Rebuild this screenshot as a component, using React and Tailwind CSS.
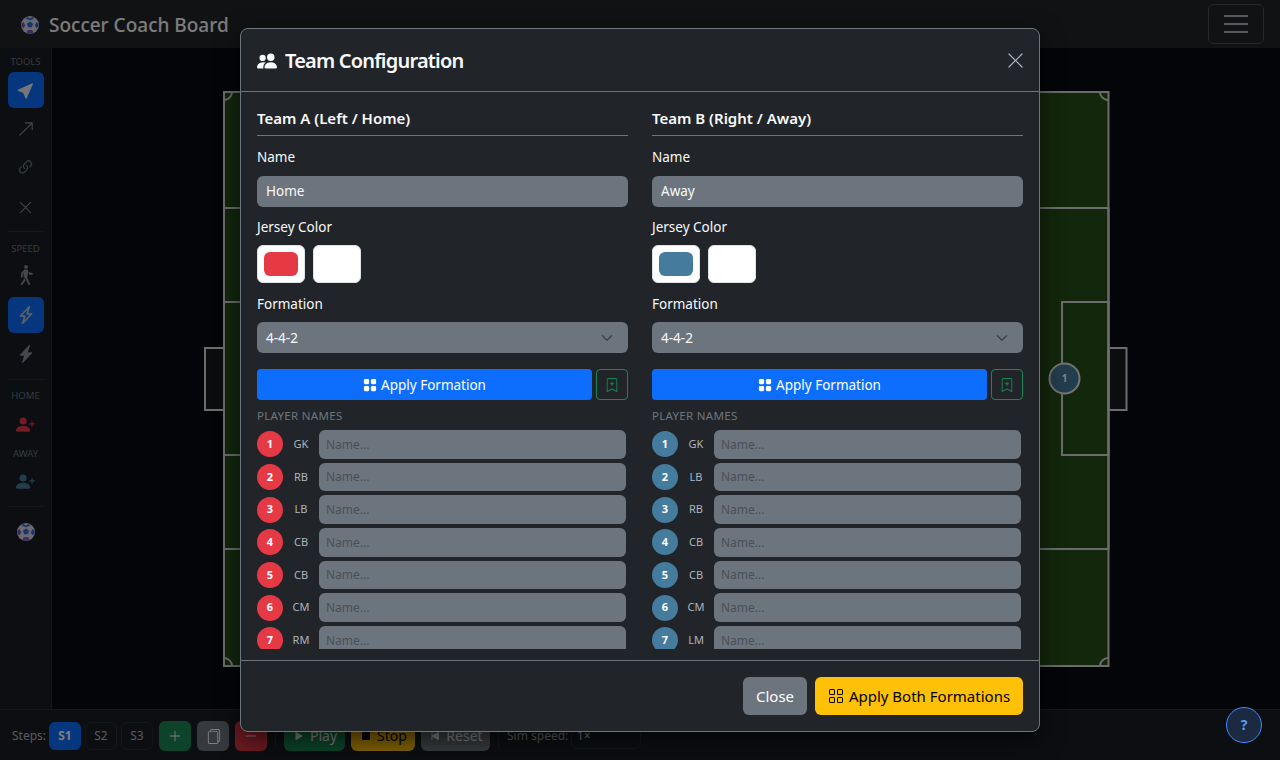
import React from "react";
import {
  BsCursorFill,
  BsArrowUpRight,
  BsLink45Deg,
  BsXLg,
  BsPersonWalking,
  BsLightningCharge,
  BsLightningChargeFill,
  BsPersonPlusFill,
  BsPeopleFill,
  BsGridFill,
  BsGrid,
  BsBookmarkPlus,
  BsChevronDown,
  BsPlusLg,
  BsFiles,
  BsDashLg,
  BsPlayFill,
  BsStopFill,
  BsSkipStartFill,
} from "react-icons/bs";

const teamA = {
  title: "Team A (Left / Home)",
  name: "Home",
  swatch: "bg-[#e63946]",
  roles: ["GK", "RB", "LB", "CB", "CB", "CM", "RM"],
};
const teamB = {
  title: "Team B (Right / Away)",
  name: "Away",
  swatch: "bg-[#457b9d]",
  roles: ["GK", "LB", "RB", "CB", "CB", "CM", "LM"],
};

function Ball({ size }) {
  return (
    <svg width={size} height={size} viewBox="0 0 20 20">
      <circle cx="10" cy="10" r="10" fill="#d6d3e6" />
      <path d="M10 6l3.4 2.5-1.3 4H7.9l-1.3-4z" fill="#2f6fd0" />
      <path d="M6.5 0.8l3.5 1.6 3.5-1.6 1 2.2-4.5 1.6L5.5 3z" fill="#3c72d0" />
      <path d="M0.3 8.5l2.6-1.8 1.8 3.8-2 3-2-1.8z" fill="#6a58b8" />
      <path d="M19.7 8.5l-2.6-1.8-1.8 3.8 2 3 2-1.8z" fill="#2f6fd0" />
      <path d="M6 19l1.5-3.5h5L14 19l-4 1z" fill="#7d5cc0" />
    </svg>
  );
}

function SideLabel({ children }) {
  return <div className="text-[9.5px] leading-[12px] text-[#6c757d] uppercase text-center">{children}</div>;
}

function SideBtn({ active, children, className }) {
  return (
    <div className={`w-9 h-9 shrink-0 rounded-md flex items-center justify-center text-[#adb5bd] ${active ? "bg-[#0d6efd]" : ""} ${className || ""}`}>
      {children}
    </div>
  );
}

function Sidebar() {
  return (
    <aside className="w-[52px] shrink-0 bg-[#191d22] border-r border-[#2b3035] flex flex-col items-center pt-2">
      <SideLabel>Tools</SideLabel>
      <SideBtn active className="mt-[4px]"><BsCursorFill size={18} className="text-[#e9ecef]" /></SideBtn>
      <SideBtn className="mt-[3px]"><BsArrowUpRight size={18} className="text-[#888f96]" /></SideBtn>
      <SideBtn className="mt-[2px]"><BsLink45Deg size={19} className="text-[#6c757d]" /></SideBtn>
      <SideBtn className="mt-[4px]"><BsXLg size={15} className="text-[#888f96]" /></SideBtn>
      <div className="w-9 h-px bg-[#2b3035] mt-[6px]" />
      <div className="mt-[11px]"><SideLabel>Speed</SideLabel></div>
      <SideBtn className="mt-[2px]"><BsPersonWalking size={20} className="text-[#888f96]" /></SideBtn>
      <SideBtn active className="mt-[4px]"><BsLightningCharge size={18} strokeWidth={0.4} className="text-[#c5cad0]" /></SideBtn>
      <SideBtn className="mt-[3px]"><BsLightningChargeFill size={18} className="text-[#888f96]" /></SideBtn>
      <div className="w-9 h-px bg-[#2b3035] mt-[7px]" />
      <div className="mt-[10px]"><SideLabel>Home</SideLabel></div>
      <SideBtn className="mt-[4px]"><BsPersonPlusFill size={19} className="text-[#e63946]" /></SideBtn>
      <div className="mt-[6px]"><SideLabel>Away</SideLabel></div>
      <SideBtn className="mt-[3px]"><BsPersonPlusFill size={19} className="text-[#457b9d]" /></SideBtn>
      <div className="w-9 h-px bg-[#2b3035] mt-[7px]" />
      <div className="mt-[16px]"><Ball size={18} /></div>
    </aside>
  );
}

// pitch is a drawing, coordinates are in its own viewBox
function Pitch() {
  const line = "#d8d8d8";
  return (
    <svg width="924" height="576" viewBox="0 0 924 576" className="block">
      <rect x="20" y="1" width="884.5" height="574" fill="#264f18" />
      <g fill="none" stroke={line} strokeWidth="2">
        <rect x="1" y="257" width="19" height="62" fill="#171a1c" />
        <rect x="904.5" y="257" width="18" height="62" fill="#171a1c" />
        <rect x="20" y="1" width="884.5" height="574" />
        <rect x="20" y="117" width="180" height="341" />
        <rect x="724" y="117" width="180.5" height="341" />
        <rect x="20" y="211" width="47" height="153" />
        <rect x="858" y="211" width="46.5" height="153" />
        <path d="M28 1a8 8 0 0 1-8 8" />
        <path d="M896 1a8 8 0 0 0 8 8" />
        <path d="M20 567a8 8 0 0 1 8 8" />
        <path d="M904 567a8 8 0 0 0-8 8" />
      </g>
      <circle cx="860.5" cy="287.5" r="15" fill="#457b9d" stroke="#e8e8e8" strokeWidth="2" />
      <text x="860.5" y="291" textAnchor="middle" fontSize="10" fontWeight="700" fill="#fff">1</text>
    </svg>
  );
}

function StepBtn({ active, children }) {
  return (
    <div className={`w-8 h-[28px] rounded-md flex items-center justify-center text-xs border ${active ? "bg-[#0d6efd] border-[#0d6efd] text-white font-bold" : "border-[#2b3035] text-[#adb5bd]"}`}>
      {children}
    </div>
  );
}

function BottomBar() {
  return (
    <footer className="h-[51px] shrink-0 bg-[#191d22] border-t border-[#2b3035] flex items-center pl-3 pt-[2px] text-[#adb5bd] text-xs">
      <span className="w-[37px]">Steps:</span>
      <div className="flex gap-1">
        <StepBtn active>S1</StepBtn>
        <StepBtn>S2</StepBtn>
        <StepBtn>S3</StepBtn>
      </div>
      <div className="flex gap-[6px] ml-[6px]">
        <div className="w-8 h-[30px] rounded-md bg-[#198754] flex items-center justify-center text-white"><BsPlusLg size={14} /></div>
        <div className="w-8 h-[30px] rounded-md bg-[#6c757d] flex items-center justify-center text-white"><BsFiles size={15} /></div>
        <div className="w-8 h-[30px] rounded-md bg-[#dc3545] flex items-center justify-center text-white"><BsDashLg size={14} /></div>
      </div>
      <div className="w-px h-6 bg-[#2b3035] ml-2" />
      <div className="flex gap-[6px] ml-2 text-sm">
        <div className="w-[61px] h-[30px] rounded-md bg-[#198754] flex items-center justify-center gap-1 text-white"><BsPlayFill size={14} />Play</div>
        <div className="w-16 h-[30px] rounded-md bg-[#ffc107] flex items-center justify-center gap-1 text-black"><BsStopFill size={14} />Stop</div>
        <div className="w-[69px] h-[30px] rounded-md bg-[#6c757d] flex items-center justify-center gap-1 text-white"><BsSkipStartFill size={14} />Reset</div>
      </div>
      <div className="w-px h-6 bg-[#2b3035] ml-2" />
      <span className="ml-2 w-[64px]">Sim speed:</span>
      <div className="w-[70px] h-[26px] rounded-md border border-[#2b3035] flex items-center pl-[5px] text-[#dee2e6]">1×</div>
    </footer>
  );
}

function PlayerRow({ n, role, color }) {
  return (
    <div className="flex items-center shrink-0 h-[28.67px] pr-[2px]">
      <div className={`w-[26px] h-[26px] shrink-0 rounded-full flex items-center justify-center text-white text-[11px] font-bold ${color}`}>{n}</div>
      <div className="w-9 text-center text-[11px] text-[#adb5bd]">{role}</div>
      <input
        placeholder="Name..."
        className="flex-1 min-w-0 h-full rounded-md bg-[#6c757d] px-[7px] text-xs text-white outline-none placeholder:text-[#495057]"
      />
    </div>
  );
}

function TeamColumn({ team }) {
  return (
    <div className="flex flex-col min-h-0 text-[#f8f9fa]">
      <h6 className="text-[15px] leading-[19px] font-semibold pt-px pb-[7px] border-b border-[#6c757d]">{team.title}</h6>
      <label className="text-[13.5px] leading-[16px] mt-[13px]">Name</label>
      <input
        defaultValue={team.name}
        className="mt-[11px] h-[31px] rounded-md bg-[#6c757d] px-[9px] pb-[2px] text-[13.5px] outline-none"
      />
      <label className="text-[13.5px] leading-[16px] mt-[12px]">Jersey Color</label>
      <div className="flex gap-2 mt-[10px]">
        <div className="w-12 h-[38px] bg-white border border-[#dee2e6] rounded-md p-[6px]"><div className={`w-full h-full rounded-md ${team.swatch}`} /></div>
        <div className="w-12 h-[38px] bg-white border border-[#dee2e6] rounded-md" />
      </div>
      <label className="text-[13.5px] leading-[16px] mt-[13px]">Formation</label>
      <div className="mt-[10px] h-[31px] rounded-md bg-[#6c757d] flex items-center justify-between pl-[9px] pr-[15px] text-[13.5px]">
        <span className="pt-px">4-4-2</span>
        <BsChevronDown size={12} className="text-[#343a40]" strokeWidth={0.8} />
      </div>
      <div className="flex gap-1 mt-4">
        <div className="flex-1 h-[31px] rounded bg-[#0d6efd] text-white text-[13.5px] flex items-center justify-center gap-1 pt-px">
          <BsGridFill size={14} />
          Apply Formation
        </div>
        <div className="w-8 h-[31px] rounded border border-[#198754] flex items-center justify-center text-[#198754]">
          <BsBookmarkPlus size={14} />
        </div>
      </div>
      <div className="text-[11.5px] leading-[14px] tracking-[0.3px] text-[#6c757d] uppercase mt-[9px] mb-[7px]">Player Names</div>
      <div className="flex-1 min-h-0 overflow-hidden flex flex-col gap-1">
        {team.roles.map((role, i) => (
          <PlayerRow key={i} n={i + 1} role={role} color={team.swatch} />
        ))}
      </div>
    </div>
  );
}

function TeamModal() {
  return (
    <div className="absolute left-[240px] top-[28px] w-[800px] h-[704px] flex flex-col bg-[#212529] border border-[#6c757d] rounded-lg shadow-[0_8px_24px_rgba(0,0,0,0.6)] text-[#f8f9fa]">
      <div className="h-[63px] shrink-0 border-b border-[#6c757d] flex items-center justify-between pl-4 pr-[14px]">
        <div className="flex items-center gap-2 pt-[2px] text-[20px] tracking-[-0.8px] font-semibold">
          <BsPeopleFill size={20} />
          Team Configuration
        </div>
        <BsXLg size={19} className="text-[#adb5bd]" />
      </div>
      <div className="flex-1 min-h-0 grid grid-cols-2 grid-rows-[minmax(0,1fr)] gap-6 pt-4 px-4 pb-[11px]">
        <TeamColumn team={teamA} />
        <TeamColumn team={teamB} />
      </div>
      <div className="h-[71px] shrink-0 border-t border-[#6c757d] flex items-center justify-end gap-2 px-4">
        <div className="w-16 h-[38px] rounded-md bg-[#6c757d] text-white text-[15px] flex items-center justify-center">Close</div>
        <div className="w-[208px] h-[38px] rounded-md bg-[#ffc107] text-black text-[15px] flex items-center justify-center gap-[5px]">
          <BsGrid size={16} />
          Apply Both Formations
        </div>
      </div>
    </div>
  );
}

export default function App() {
  return (
    <div className="relative w-[1280px] h-[760px] overflow-hidden flex flex-col bg-[#070a10] font-['Noto_Sans','Open_Sans',sans-serif]">
      <nav className="h-12 shrink-0 bg-[#212529] flex items-center justify-between pl-[21px] pr-4">
        <div className="flex items-center gap-[10px] mt-[2px] text-[#f8f9fa] text-[19px] font-medium">
          <Ball size={18} />
          Soccer Coach Board
        </div>
        <div className="w-14 h-10 rounded-md border border-[#495057] flex flex-col items-center justify-center gap-[6px]">
          <span className="w-6 h-[2px] bg-[#adb5bd]" />
          <span className="w-6 h-[2px] bg-[#adb5bd]" />
          <span className="w-6 h-[2px] bg-[#adb5bd]" />
        </div>
      </nav>
      <div className="flex-1 min-h-0 flex">
        <Sidebar />
        <main className="flex-1 flex items-center justify-center">
          <Pitch />
        </main>
      </div>
      <BottomBar />

      {/* dimmed backdrop, modal and help button sit above the page */}
      <div className="absolute inset-0 bg-black/50" />
      <TeamModal />
      <div className="absolute left-[1226px] top-[707px] w-9 h-9 rounded-full border border-[#3d8bfd] bg-[#1b2a41] flex items-center justify-center text-[#5a9cf8] text-sm font-bold">?</div>
    </div>
  );
}
